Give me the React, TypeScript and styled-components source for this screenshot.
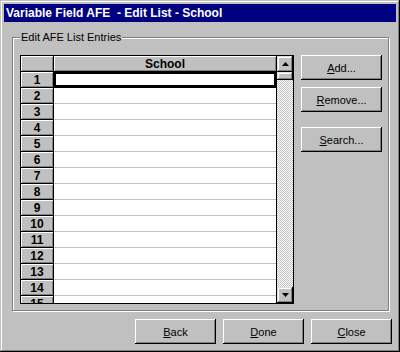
import styled, { createGlobalStyle } from "styled-components";

const GlobalStyle = createGlobalStyle`
  body {
    margin: 0;
    background-color: #c0c0c0;
    font-family: "Liberation Sans", Arial, sans-serif;
  }
`;

const Window = styled.div`
  box-sizing: border-box;
  width: 400px;
  height: 352px;
  padding: 4px;
  display: flex;
  flex-direction: column;
  background-color: #c0c0c0;
  box-shadow: inset -1px -1px #000, inset 1px 1px #c0c0c0,
    inset -2px -2px #808080, inset 2px 2px #fff;
`;

const TitleBar = styled.div`
  height: 18px;
  line-height: 18px;
  padding-left: 2px;
  background-color: #000080;
  color: #fff;
  font-size: 12px;
  font-weight: bold;
  white-space: pre;
`;

const Body = styled.div`
  flex: 1;
  display: flex;
  flex-direction: column;
  padding: 15px 7px 0 8px;
`;

const GroupBox = styled.div`
  position: relative;
  box-sizing: border-box;
  height: 274px;
  border: 1px solid #808080;
  box-shadow: 1px 1px 0 #fff, inset 1px 1px 0 #fff;
  padding: 17px 6px 6px 7px;
  display: flex;
  gap: 7px;
`;

const GroupLabel = styled.span`
  position: absolute;
  top: -8px;
  left: 7px;
  padding: 0 1px;
  background-color: #c0c0c0;
  font-size: 11px;
  line-height: 14px;
  color: #000;
`;

const Grid = styled.div`
  box-sizing: border-box;
  width: 274px;
  border: 1px solid #000;
  display: flex;
  background-color: #fff;
`;

const Table = styled.div`
  flex: 1;
  display: flex;
  flex-direction: column;
  overflow: hidden;
`;

const Row = styled.div`
  display: flex;
  flex-shrink: 0;
  height: 16px;
`;

const HeadCell = styled.div<{ wide?: boolean }>`
  box-sizing: border-box;
  width: ${(p) => (p.wide ? "222px" : "33px")};
  height: 16px;
  border-right: ${(p) => (p.wide ? "none" : "1px solid #000")};
  border-bottom: 1px solid #000;
  background-color: #c0c0c0;
  box-shadow: inset 1px 1px #fff, inset -1px -1px #808080;
  font-size: 12px;
  font-weight: bold;
  line-height: 16px;
  text-align: center;
  color: #000;
`;

const Cell = styled.div<{ selected?: boolean }>`
  box-sizing: border-box;
  width: 222px;
  height: 16px;
  border-bottom: 1px solid ${(p) => (p.selected ? "#000" : "#c0c0c0")};
  box-shadow: ${(p) => (p.selected ? "inset 0 0 0 2px #000" : "none")};
  background-color: #fff;
`;

const ScrollBar = styled.div`
  width: 16px;
  border-left: 1px solid #000;
  display: flex;
  flex-direction: column;
`;

const ScrollButton = styled.div<{ size: number }>`
  height: ${(p) => p.size}px;
  flex-shrink: 0;
  background-color: #c0c0c0;
  box-shadow: inset -1px -1px #000, inset 1px 1px #dfdfdf,
    inset -2px -2px #808080, inset 2px 2px #fff;
  display: flex;
  align-items: center;
  justify-content: center;
`;

const Track = styled.div`
  flex: 1;
  background: repeating-conic-gradient(#c0c0c0 0 25%, #fff 0 50%) 0 0 / 2px 2px;
`;

const SideButtons = styled.div`
  display: flex;
  flex-direction: column;
  width: 81px;
`;

const Button = styled.button<{ gapTop?: number }>`
  all: unset;
  box-sizing: border-box;
  width: 81px;
  height: 25px;
  margin-top: ${(p) => p.gapTop ?? 0}px;
  background-color: #c0c0c0;
  box-shadow: inset -1px -1px #000, inset 1px 1px #fff,
    inset -2px -2px #808080;
  font-family: "Liberation Sans", Arial, sans-serif;
  font-size: 11px;
  color: #000;
  text-align: center;
  line-height: 24px;
  cursor: default;
`;

const ButtonBar = styled.div`
  display: flex;
  justify-content: flex-end;
  gap: 7px;
  margin-top: 8px;
  margin-right: -3px;
`;

function Arrow({ up }: { up?: boolean }) {
  return (
    <svg width="7" height="4" viewBox="0 0 7 4">
      <polygon points={up ? "3.5,0 7,4 0,4" : "0,0 7,0 3.5,4"} fill="#000" />
    </svg>
  );
}

const rows = Array.from({ length: 15 }, (_, i) => i + 1);

function App() {
  return (
    <>
      <GlobalStyle />
      <Window>
        <TitleBar>Variable Field AFE  - Edit List - School</TitleBar>
        <Body>
          <GroupBox>
            <GroupLabel>Edit AFE List Entries</GroupLabel>
            <Grid>
              <Table>
                <Row>
                  <HeadCell />
                  <HeadCell wide>School</HeadCell>
                </Row>
                {rows.map((n) => (
                  <Row key={n}>
                    <HeadCell>{n}</HeadCell>
                    <Cell selected={n === 1} />
                  </Row>
                ))}
              </Table>
              <ScrollBar>
                <ScrollButton size={16}>
                  <Arrow up />
                </ScrollButton>
                <ScrollButton size={8} />
                <Track />
                <ScrollButton size={16}>
                  <Arrow />
                </ScrollButton>
              </ScrollBar>
            </Grid>
            <SideButtons>
              <Button>
                <u>A</u>dd...
              </Button>
              <Button gapTop={7}>
                <u>R</u>emove...
              </Button>
              <Button gapTop={15}>
                <u>S</u>earch...
              </Button>
            </SideButtons>
          </GroupBox>
          <ButtonBar>
            <Button>
              <u>B</u>ack
            </Button>
            <Button>
              <u>D</u>one
            </Button>
            <Button>
              <u>C</u>lose
            </Button>
          </ButtonBar>
        </Body>
      </Window>
    </>
  );
}

export default App;
